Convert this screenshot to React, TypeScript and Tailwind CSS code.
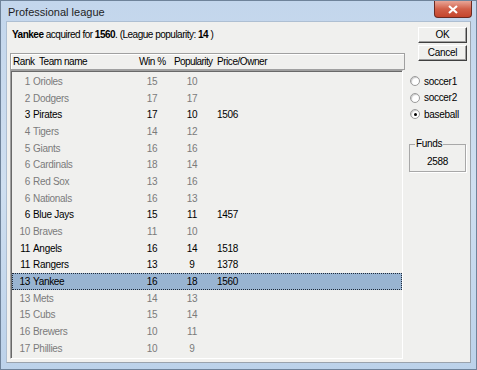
import React from "react";

type Team = {
  rank: number;
  name: string;
  win: number;
  pop: number;
  price?: number;
  selected?: boolean;
};

const teams: Team[] = [
  { rank: 1, name: "Orioles", win: 15, pop: 10 },
  { rank: 2, name: "Dodgers", win: 17, pop: 17 },
  { rank: 3, name: "Pirates", win: 17, pop: 10, price: 1506 },
  { rank: 4, name: "Tigers", win: 14, pop: 12 },
  { rank: 5, name: "Giants", win: 16, pop: 16 },
  { rank: 6, name: "Cardinals", win: 18, pop: 14 },
  { rank: 6, name: "Red Sox", win: 13, pop: 16 },
  { rank: 6, name: "Nationals", win: 16, pop: 13 },
  { rank: 6, name: "Blue Jays", win: 15, pop: 11, price: 1457 },
  { rank: 10, name: "Braves", win: 11, pop: 10 },
  { rank: 11, name: "Angels", win: 16, pop: 14, price: 1518 },
  { rank: 11, name: "Rangers", win: 13, pop: 9, price: 1378 },
  { rank: 13, name: "Yankee", win: 16, pop: 18, price: 1560, selected: true },
  { rank: 13, name: "Mets", win: 14, pop: 13 },
  { rank: 15, name: "Cubs", win: 15, pop: 14 },
  { rank: 16, name: "Brewers", win: 10, pop: 11 },
  { rank: 17, name: "Phillies", win: 10, pop: 9 },
];

function Radio({ label, checked }: { label: string; checked?: boolean }) {
  return (
    <div className="flex items-center h-[16.5px]">
      <span className="w-[10px] h-[10px] rounded-full border border-[#9a9a9a] bg-white flex items-center justify-center shadow-[inset_1px_1px_1px_#c8c8c8]">
        {checked && <span className="w-[3px] h-[3px] rounded-full bg-black" />}
      </span>
      <span className="ml-[4px]">{label}</span>
    </div>
  );
}

export default function App() {
  return (
    <div
      className="w-[477px] h-[370px] flex flex-col border border-[#6f839a] bg-gradient-to-b from-[#c3d6ec] via-[#cfdff0] to-[#bcd2ea] text-[10px] tracking-[-0.3px] text-black"
      style={{ fontFamily: '"Liberation Sans", Arial, sans-serif' }}
    >
      {/* Title bar */}
      <div className="h-[20px] flex items-center justify-between shrink-0">
        <span className="ml-[7px] mt-[3px] text-[11px] tracking-normal text-[#1e1e1e]">
          Professional league
        </span>
        <div className="self-start mr-[4px] w-[38px] h-[17px] rounded-b-[4px] border border-[#6b2a22] border-t-0 bg-gradient-to-b from-[#e8a597] via-[#d15f48] to-[#c4452c] flex items-center justify-center">
          <svg width="10" height="9" viewBox="0 0 10 9">
            <path d="M1 1 L9 8 M9 1 L1 8" stroke="#fff" strokeWidth="2.2" />
          </svg>
        </div>
      </div>

      {/* Client area */}
      <div className="flex-1 mx-[5px] mb-[6px] bg-[#f0f0ee] border border-t-[#aebfd2] border-l-[#aebfd2] border-r-[#9aa3ad] border-b-[#9aa3ad] flex">
        {/* Left column */}
        <div className="w-[398px] pl-[3px] flex flex-col">
          <div className="h-[31px] pt-[6px] pl-[2px] leading-[14px] tracking-[-0.5px]">
            <b>Yankee</b> acquired for <b>1560</b>. (League popularity: <b>14</b> )
          </div>

          {/* Header */}
          <div className="h-[17px] flex items-center border border-[#a0a0a0] shadow-[inset_1px_1px_0_#ffffff] pl-[2px] shrink-0 tracking-[-0.45px]">
            <span className="w-[26px]">Rank</span>
            <span className="w-[100px]">Team name</span>
            <span className="w-[35px]">Win %</span>
            <span className="w-[43px] tracking-[-0.6px]">Popularity</span>
            <span>Price/Owner</span>
          </div>

          {/* List */}
          <div className="h-[289px] w-[393px] border border-t-[#a0a0a0] border-l-[#a0a0a0] border-r-white border-b-white">
            <div className="h-full border-t border-l border-t-[#696969] border-l-[#696969] pt-[1px]">
              {teams.map((t, i) => (
                <div
                  key={i}
                  className={
                    "h-[16.7px] flex items-center " +
                    (t.selected
                      ? "bg-[#99b4d1] outline-1 outline-dotted outline-[#1f2a3a] -outline-offset-1 text-black"
                      : t.price
                        ? "text-black"
                        : "text-[#7b7b7b]")
                  }
                >
                  <span className="w-[18px] text-right">{t.rank}</span>
                  <span className="w-[107px] pl-[3px]">{t.name}</span>
                  <span className="w-[30px] text-center">{t.win}</span>
                  <span className="w-[50px] text-center">{t.pop}</span>
                  <span>{t.price ?? ""}</span>
                </div>
              ))}
            </div>
          </div>
        </div>

        {/* Right column */}
        <div className="flex-1 flex flex-col pl-[4px]">
          <div className="pl-[9px] pt-[5px] flex flex-col gap-[2px]">
            <button className="w-[49px] h-[16px] border border-t-white border-l-white border-r-[#404040] border-b-[#404040] shadow-[inset_-1px_-1px_0_#a0a0a0] bg-[#f0f0ee] leading-none">
              OK
            </button>
            <button className="w-[49px] h-[16px] border border-t-white border-l-white border-r-[#404040] border-b-[#404040] shadow-[inset_-1px_-1px_0_#a0a0a0] bg-[#f0f0ee] leading-none">
              Cancel
            </button>
          </div>

          <div className="mt-[12px] pl-[1px]">
            <Radio label="soccer1" />
            <Radio label="soccer2" />
            <Radio label="baseball" checked />
          </div>

          <div className="mt-[21px] w-[57px] h-[28px] border border-[#a8a8a8] shadow-[1px_1px_0_#ffffff] relative flex items-end justify-center pb-[3px]">
            <span className="absolute -top-[7px] left-[5px] px-[1px] bg-[#f0f0ee] leading-[12px]">
              Funds
            </span>
            <span className="leading-[12px]">2588</span>
          </div>
        </div>
      </div>
    </div>
  );
}
